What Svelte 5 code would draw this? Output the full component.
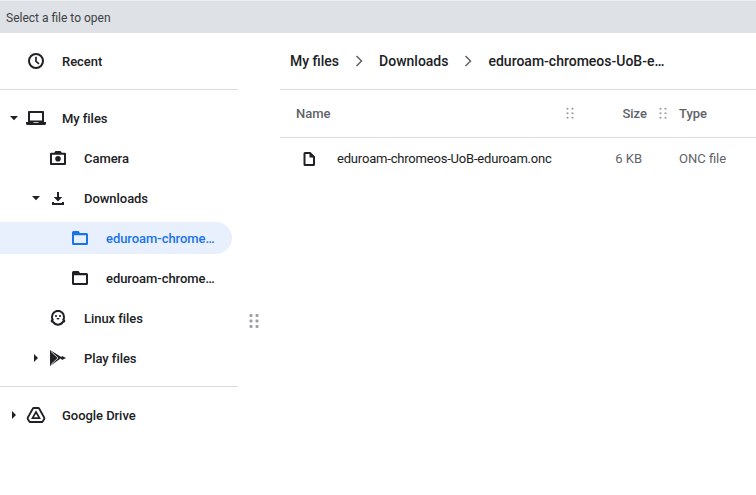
<script>
  const dotsSmall = [[0,0],[5,0],[0,4.5],[5,4.5],[0,9],[5,9]];
</script>

{#snippet arrow(dir)}
  <span class="arrow"><svg width="10" height="10" viewBox="0 0 10 10">
    {#if dir === 'down'}<path d="M1 3h8L5 7.2z" fill="#202124"/>{:else if dir === 'right'}<path d="M3 1l4 4-4 4z" fill="#202124"/>{/if}
  </svg></span>
{/snippet}

{#snippet dots(color, r, w, h, cls)}
  <svg class={cls} width={w} height={h} viewBox="-1.5 -1.5 8 12.5">
    {#each dotsSmall as d}<circle cx={d[0]} cy={d[1]} r={r} fill={color}/>{/each}
  </svg>
{/snippet}

<div class="app">
  <div class="title">Select a file to open</div>
  <div class="body">
    <nav class="side">
      <div class="row">
        <span class="arrow"></span>
        <svg class="ic" viewBox="0 0 20 20"><circle cx="10" cy="10" r="7" fill="none" stroke="#202124" stroke-width="2"/><path d="M10 5.800v4.600l3 2.400" fill="none" stroke="#202124" stroke-width="1.700"/></svg>
        <span class="lb">Recent</span>
      </div>
      <hr />
      <div class="row">
        {@render arrow('down')}
        <svg class="ic" viewBox="0 0 20 20"><path d="M3 3h14a1 1 0 0 1 1 1v10H2V4a1 1 0 0 1 1-1zM4 5v7.500h12V5z" fill="#202124" fill-rule="evenodd"/><path d="M0 14h7.500v.8h5V14H20v1.500a1.500 1.500 0 0 1-1.500 1.500h-17A1.500 1.500 0 0 1 0 15.500z" fill="#202124"/></svg>
        <span class="lb">My files</span>
      </div>
      <div class="row d1">
        <span class="arrow"></span>
        <svg class="ic" viewBox="0 0 20 20"><path d="M7.500 3h5l1.300 1.800H17a1 1 0 0 1 1 1V16a1 1 0 0 1-1 1H3a1 1 0 0 1-1-1V5.800a1 1 0 0 1 1-1h3.200zM4 6.800V15h12V6.800z" fill="#202124" fill-rule="evenodd"/><circle cx="10" cy="10.800" r="2.800" fill="#202124"/></svg>
        <span class="lb">Camera</span>
      </div>
      <div class="row d1">
        {@render arrow('down')}
        <svg class="ic" viewBox="0 0 20 20"><path d="M9 4h2v5h3.200L10 13.400 5.800 9H9z" fill="#202124"/><path d="M5 14v2h10v-2" fill="none" stroke="#202124" stroke-width="2"/></svg>
        <span class="lb">Downloads</span>
      </div>
      <div class="row d2 selected">
        <span class="arrow"></span>
        <svg class="ic" viewBox="0 0 20 20"><path d="M3.500 3h5L10 5h6.500A1.500 1.500 0 0 1 18 6.500v9a1.500 1.500 0 0 1-1.500 1.500h-13A1.500 1.500 0 0 1 2 15.500v-11A1.500 1.500 0 0 1 3.500 3zM4 7.200V15h12V7.200z" fill="#1a73e8" fill-rule="evenodd"/></svg>
        <span class="lb cut">eduroam-chromeos-UoB-eduroam</span>
      </div>
      <div class="row d2">
        <span class="arrow"></span>
        <svg class="ic" viewBox="0 0 20 20"><path d="M3.500 3h5L10 5h6.500A1.500 1.500 0 0 1 18 6.500v9a1.500 1.500 0 0 1-1.500 1.500h-13A1.500 1.500 0 0 1 2 15.500v-11A1.500 1.500 0 0 1 3.500 3zM4 7.200V15h12V7.200z" fill="#202124" fill-rule="evenodd"/></svg>
        <span class="lb cut">eduroam-chromeos-UoB-eduroam</span>
      </div>
      <div class="row d1">
        <span class="arrow"></span>
        <svg class="ic" viewBox="0 0 20 20"><path d="M10 3c3.500 0 6 2.700 6 6 0 1-.2 1.800-.6 2.600.8.300 1.100.9.900 1.500-.2.500-.7.800-1.300.7-1.100 1.500-2.900 2.900-5 2.900s-3.900-1.400-5-2.900c-.6.100-1.100-.2-1.300-.7-.2-.6.100-1.200.9-1.500C4.200 10.800 4 10 4 9c0-3.300 2.500-6 6-6z" fill="none" stroke="#202124" stroke-width="2"/><circle cx="8" cy="8" r="1.100" fill="#202124"/><circle cx="12" cy="8" r="1.100" fill="#202124"/><path d="M8.200 10h3.600L10 12z" fill="#202124"/><path d="M8 2h4v1.500H8z" fill="#202124"/></svg>
        <span class="lb">Linux files</span>
      </div>
      <div class="row d1">
        {@render arrow('right')}
        <svg class="ic" viewBox="0 0 20 20"><path d="M2 2 14 9.500 2 18z" fill="#202124"/><path d="M2.800 3.300 10 10l-7.200 6.700" fill="none" stroke="#fff" stroke-width=".8"/><path d="M14 8l4 2-4 2-1.500-2z" fill="#202124"/></svg>
        <span class="lb">Play files</span>
      </div>
      <hr />
      <div class="row">
        {@render arrow('right')}
        <svg class="ic" viewBox="0 0 20 20"><path d="M7.800 3h4.400a1 1 0 0 1 .9.500l5.200 9.300a1 1 0 0 1 0 1l-1.600 2.700a1 1 0 0 1-.9.500H4.200a1 1 0 0 1-.9-.5l-1.600-2.700a1 1 0 0 1 0-1l5.200-9.300a1 1 0 0 1 .9-.5z" fill="none" stroke="#202124" stroke-width="1.800"/><path d="M10 7l3.500 6.200h-7z" fill="none" stroke="#202124" stroke-width="1.700"/></svg>
        <span class="lb">Google Drive</span>
      </div>
    </nav>

    <div class="gutter">
      <svg width="10" height="16" viewBox="0 0 10 16">
        {#each [[2,2.500],[8,2.500],[2,8],[8,8],[2,13.500],[8,13.500]] as d}<rect x={d[0]-1.500} y={d[1]-1.500} width="3" height="3" rx="1" fill="#9aa0a6"/>{/each}
      </svg>
    </div>

    <main class="main">
      <div class="crumbs">
        <span>My files</span>
        <svg class="sep" viewBox="0 0 10 14"><path d="M2.500 2l5 5-5 5" fill="none" stroke="#5f6368" stroke-width="1.500"/></svg>
        <span>Downloads</span>
        <svg class="sep" viewBox="0 0 10 14"><path d="M2.500 2l5 5-5 5" fill="none" stroke="#5f6368" stroke-width="1.500"/></svg>
        <span class="crumb-last">eduroam-chromeos-UoB-eduroam</span>
      </div>
      <div class="thead">
        <span class="th-name">Name</span>
        {@render dots('#9aa0a6', 1.100, 8, 13, 'grip')}
        <span class="th-size">Size</span>
        {@render dots('#9aa0a6', 1.100, 8, 13, 'grip2')}
        <span class="th-type">Type</span>
      </div>
      <div class="trow">
        <svg class="fic" viewBox="0 0 20 20"><path d="M6 5h5l4 4v7.500a.500.500 0 0 1-.500.500h-8.500a.500.500 0 0 1-.500-.500V5.500A.500.500 0 0 1 6 5z" fill="none" stroke="#202124" stroke-width="2"/><path d="M10.500 4.500v5h5z" fill="#202124"/></svg>
        <span class="td-name">eduroam-chromeos-UoB-eduroam.onc</span>
        <span class="td-size">6 KB</span>
        <span class="td-type">ONC file</span>
      </div>
    </main>
  </div>
</div>

<style>
  :global(body) { margin: 0; background: #fff; }
  .app {
    width: 756px;
    height: 495px;
    overflow: hidden;
    display: flex;
    flex-direction: column;
    font-family: Roboto, "Liberation Sans", sans-serif;
    color: #202124;
  }
  .title {
    height: 32px;
    line-height: 34px;
    border-top: 1px solid #eceef0;
    background: #dee1e6;
    padding-left: 6px;
    font-size: 12px;
    color: #3c4043;
    flex: none;
  }
  .body { display: flex; flex: 1; min-height: 0; }
  .side {
    width: 238px;
    flex: none;
    padding-top: 8px;
    font-size: 13px;
    font-weight: 500;
    letter-spacing: -0.05px;
  }
  hr {
    border: 0;
    height: 1px;
    background: #dadce0;
    margin: 8px 0;
  }
  .row {
    height: 40px;
    display: flex;
    align-items: center;
    box-sizing: border-box;
    width: 232px;
  }
  .row.d1 { padding-left: 22px; }
  .row.d2 { padding-left: 44px; }
  .selected {
    height: 32px;
    margin: 4px 0;
    background: #e8f0fe;
    border-radius: 0 16px 16px 0;
    color: #1a73e8;
  }
  .arrow {
    width: 26px;
    flex: none;
    display: flex;
    padding-left: 9px;
    box-sizing: border-box;
  }
  .arrow svg { display: block; }
  .ic { width: 20px; height: 20px; flex: none; margin-right: 16px; }
  .lb { white-space: nowrap; }
  .cut {
    width: 110px;
    overflow: hidden;
    text-overflow: ellipsis;
  }
  .gutter {
    width: 42px;
    flex: none;
    display: flex;
    justify-content: center;
    align-items: flex-start;
    padding-top: 280px;
    box-sizing: border-box;
    padding-right: 10px;
  }
  .gutter svg { display: block; }
  .main { flex: 1; min-width: 0; }
  .crumbs {
    height: 56px;
    border-bottom: 1px solid #dadce0;
    display: flex;
    align-items: center;
    padding-left: 10px;
    font-size: 14px;
    font-weight: 500;
    white-space: nowrap;
  }
  .sep { width: 10px; height: 14px; margin: 0 15px; flex: none; }
  .crumb-last { width: 180px; overflow: hidden; text-overflow: ellipsis; }
  .thead {
    height: 47px;
    border-bottom: 1px solid #dadce0;
    display: flex;
    align-items: center;
    font-size: 13px;
    font-weight: 500;
    color: #5f6368;
  }
  .th-name { width: 286px; padding-left: 16px; box-sizing: border-box; }
  .grip { flex: none; }
  .th-size { width: 73px; text-align: right; }
  .grip2 { flex: none; margin-left: 12px; }
  .th-type { margin-left: 12px; }
  .trow {
    height: 40px;
    display: flex;
    align-items: center;
    font-size: 13px;
    color: #3c4043;
  }
  .fic { width: 20px; height: 20px; flex: none; margin-left: 19px; margin-right: 18px; }
  .td-name { width: 216px; color: #202124; white-space: nowrap; letter-spacing: -0.19px; }
  .td-size { width: 89px; text-align: right; color: #5f6368; }
  .td-type { margin-left: 37px; color: #5f6368; }
</style>
